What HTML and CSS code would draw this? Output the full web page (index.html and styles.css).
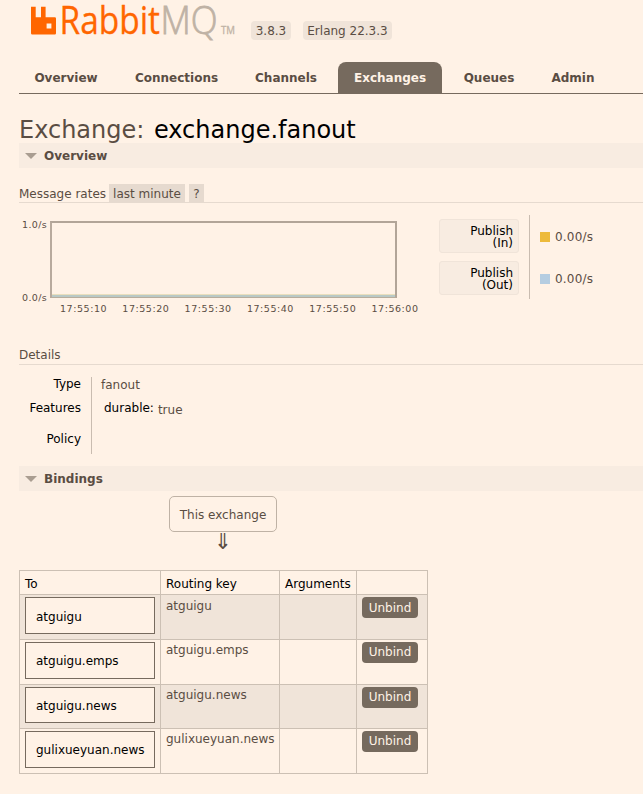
FILE: index.html
```html
<!DOCTYPE html>
<html lang="en">
<head>
<meta charset="utf-8">
<title>RabbitMQ Management</title>
<link rel="stylesheet" href="styles.css">
</head>
<body>
<header>
  <svg class="logo" width="206" height="46" viewBox="0 0 206 46" role="img" aria-label="RabbitMQ TM">
    <path fill="#ff6600" fill-rule="evenodd" d="M1 6.8h4.7v10.5h5.3V6.8h4.6v10.5h9.2q1.2 0 1.2 1.2v14.7q0 1.3-1.2 1.3H2.2Q1 34.500 1 33.200zM16.600 23.400v5h4.800v-5z"/>
    <text class="rabbit" x="29.500" y="34.200" textLength="100.500" lengthAdjust="spacingAndGlyphs">Rabbit</text>
    <text class="mq" x="130.500" y="34.200" textLength="57" lengthAdjust="spacingAndGlyphs">MQ</text>
    <text class="tm" x="191" y="34" textLength="14" lengthAdjust="spacingAndGlyphs">TM</text>
  </svg>
  <span class="version v1">3.8.3</span>
  <span class="version v2">Erlang 22.3.3</span>
</header>
<nav>
  <a class="n1">Overview</a><a class="n2">Connections</a><a class="n3">Channels</a><a class="n4 selected">Exchanges</a><a class="n5">Queues</a><a class="n6">Admin</a>
</nav>
<main>
  <h1>Exchange: <b>exchange.fanout</b></h1>
  <h2><i></i>Overview</h2>
  <h3 class="rates-title"><span class="rate-label">Message rates</span><span class="option minute">last minute</span><span class="option help">?</span></h3>
  <section class="rates">
    <div class="ylabels"><span>1.0/s</span><span>0.0/s</span></div>
    <div class="chart">
      <div class="plot"></div>
      <div class="xlabels"><span>17:55:10</span><span>17:55:20</span><span>17:55:30</span><span>17:55:40</span><span>17:55:50</span><span>17:56:00</span></div>
    </div>
    <div class="legend">
      <div class="keys"><div>Publish<br>(In)</div><div>Publish<br>(Out)</div></div>
      <div class="values"><div><i class="in"></i>0.00/s</div><div><i class="out"></i>0.00/s</div></div>
    </div>
  </section>
  <h3 class="details-title">Details</h3>
  <section class="facts">
    <div class="names"><div>Type</div><div>Features</div><div>Policy</div></div>
    <div class="facts-values"><div class="type">fanout</div><div class="feature"><b>durable:</b><span>true</span></div></div>
  </section>
  <h2><i></i>Bindings</h2>
  <div class="source"><span class="exchange">This exchange</span><span class="arrow">⇓</span></div>
  <table>
    <colgroup><col class="c1"><col class="c2"><col class="c3"><col class="c4"></colgroup>
    <thead><tr><th>To</th><th>Routing key</th><th>Arguments</th><th></th></tr></thead>
    <tbody>
    <tr class="alt first"><td><a class="queue">atguigu</a></td><td>atguigu</td><td></td><td><button>Unbind</button></td></tr>
    <tr><td><a class="queue">atguigu.emps</a></td><td>atguigu.emps</td><td></td><td><button>Unbind</button></td></tr>
    <tr class="alt short"><td><a class="queue">atguigu.news</a></td><td>atguigu.news</td><td></td><td><button>Unbind</button></td></tr>
    <tr><td><a class="queue">gulixueyuan.news</a></td><td>gulixueyuan.news</td><td></td><td><button>Unbind</button></td></tr>
    </tbody>
  </table>
</main>
</body>
</html>
```
FILE: styles.css
```css
* { box-sizing: border-box; }
body { margin: 0; height: 794px; overflow: hidden; background: #fff2e6; color: #5a4d43; font: 12px/16px Verdana, "DejaVu Sans", sans-serif; }
header { display: flex; height: 62px; padding-left: 30px; }
.logo { display: block; flex: none; overflow: visible; }
.logo text { font-family: "Open Sans", sans-serif; }
.rabbit { font-size: 38px; fill: #ff6600; stroke: #ff6600; stroke-width: .3px; }
.mq { font-size: 38px; fill: #bfb2a5; stroke: #bfb2a5; stroke-width: .8px; font-weight: 300; }
.tm { font-size: 10px; fill: #bfb2a5; stroke: #bfb2a5; stroke-width: .3px; }
.version { height: 19px; margin-top: 21px; border-radius: 4px; background: #f0e4d9; line-height: 20px; text-align: center; }
.v1 { width: 40px; margin-left: 15px; }
.v2 { width: 89px; margin-left: 12px; }
nav { display: flex; height: 32px; margin-left: 19px; border-bottom: 1px solid #766a5e; font-weight: bold; }
nav a { height: 31px; line-height: 32px; text-align: center; border-radius: 8px 8px 0 0; }
.n1 { width: 94px; }
.n2 { width: 115px; margin-left: 6px; }
.n3 { width: 94px; margin-left: 5px; }
.n4 { width: 104px; margin-left: 5px; }
.n5 { width: 82px; margin-left: 6px; }
.n6 { width: 74px; margin-left: 6px; }
.selected { background: #766a5e; color: #fff2e6; }
main { padding-left: 19px; }
h1 { height: 49px; margin: 0; padding-top: 21px; font-size: 24px; line-height: 30px; font-weight: normal; white-space: nowrap; }
h1 b { margin-left: 2px; color: #000; font-weight: normal; }
h2 { display: flex; align-items: center; height: 25px; margin: 0; font-size: 12px; background: #f8ece1; }
h2 i { margin: 0 8px 0 6px; border: 5.5px solid transparent; border-top: 6px solid #a99d91; border-bottom: 0; }
h2 i { border-left-width: 6px; border-right-width: 6px; margin-right: 7px; }
h3 { margin: 0; font-size: 12px; font-weight: normal; border-bottom: 1px solid #e6dacf; }
.rates-title { display: flex; height: 19px; margin-top: 16px; line-height: 20px; }
.rate-label { width: 90px; }
.option { background: #e6dacf; text-align: center; }
.minute { width: 76px; }
.help { width: 15px; margin-left: 4px; }
.rates { display: flex; height: 142px; padding-top: 18px; }
.ylabels { display: flex; flex-direction: column; justify-content: space-between; width: 31px; height: 81px; padding-right: 3px; text-align: right; font-size: 9.5px; letter-spacing: .35px; line-height: 8px; white-space: nowrap; }
.chart { width: 350px; }
.plot { width: 347px; height: 77px; border: 2px solid #b2a598; border-bottom: 1px solid #b8ad9d; background: linear-gradient(#eadfbd, #eadfbd) 0 100% / 100% 3px no-repeat; border-left-color: #b8aa9d; box-shadow: inset 0 -2px #b9c9c5; }
.xlabels { display: flex; gap: 15.300px; margin-left: 10px; padding-top: 3px; font-size: 9.5px; letter-spacing: .55px; }
.xlabels span { width: 47px; flex: none; white-space: nowrap; }
.legend { display: flex; height: 84px; margin: -6px 0 0 39px; }
.keys { display: grid; gap: 8px; width: 91px; padding: 4px 10px 4px 0; border-right: 1px solid #c9bcb0; color: #000; text-align: right; }
.keys div { height: 34px; padding: 5px 5px 0 0; border: 1px solid #f0e4d9; border-radius: 3px; background: #f8ece1; line-height: 12px; }
.values div { display: flex; align-items: center; height: 42px; padding: 1px 0 0 10px; letter-spacing: .2px; }
.values i { width: 10px; height: 10px; margin-right: 5px; background: #edba3a; }
.values i.out { background: #b5cde1; }
.details-title { height: 20px; line-height: 20px; }
.facts { display: flex; height: 101px; padding-top: 12px; }
.names { width: 73px; height: 77px; padding-right: 10px; border-right: 1px solid #c9bcb0; color: #000; text-align: right; line-height: 14px; }
.names div { height: 24px; }
.names div + div + div { margin-top: 7px; }
.facts-values { padding-left: 9px; }
.feature { display: flex; gap: 4px; margin: 7px 0 0 3px; }
.feature b { color: #000; font-weight: normal; }
.feature span { padding-top: 2px; }
.source { display: flex; flex-direction: column; align-items: center; width: 108px; height: 79px; margin-left: 150px; padding-top: 5px; }
.exchange { width: 108px; height: 36px; border: 1px solid #bfb2a5; border-radius: 5px; line-height: 36px; text-align: center; }
.arrow { font-size: 22px; line-height: 20px; }
table { width: 409px; table-layout: fixed; border-collapse: collapse; }
.c1 { width: 141px; }
.c2 { width: 119px; }
.c3 { width: 77px; }
.c4 { width: 71px; }
th, td { border: 1px solid #ccc0b4; padding: 0 0 0 5px; text-align: left; vertical-align: top; white-space: nowrap; }
th { height: 24px; padding-top: 4px; color: #000; font-weight: normal; line-height: 18px; }
td { height: 45px; padding-top: 2px; }
.first td { line-height: 18px; }
.short td { height: 44px; }
.alt { background: #f0e4d9; }
.queue { display: block; width: 130px; height: 37px; padding-left: 10px; border: 1px solid #766a5e; background: #fff2e6; color: #000; line-height: 37px; }
.first .queue { line-height: 38px; }
.short .queue { height: 36px; }
button { display: block; width: 56px; height: 21px; padding: 0; border: 0; border-radius: 4px; background: #766a5e; color: #fff2e6; font: inherit; line-height: 21px; }
.first button { line-height: 23px; }
```
